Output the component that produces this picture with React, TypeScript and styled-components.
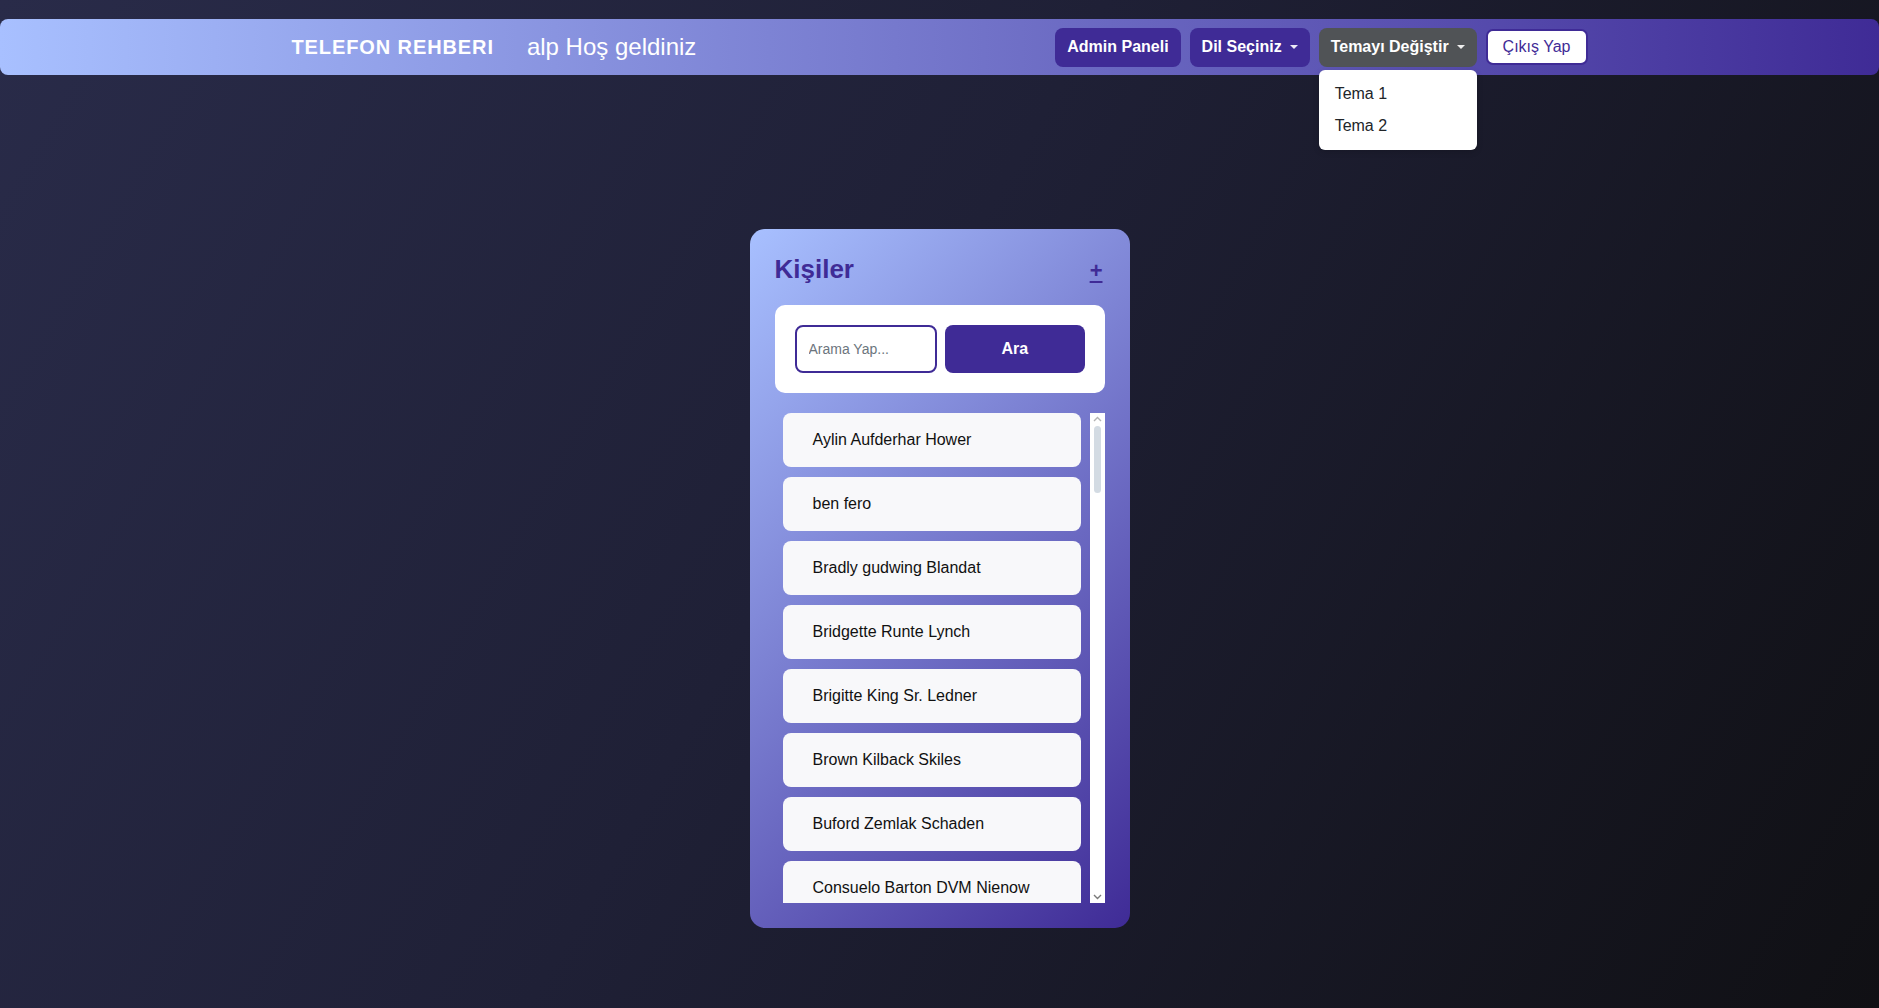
import React from 'react';

import styled, { createGlobalStyle } from 'styled-components';

const PURPLE = '#3f2b96';
const SKY = '#a8c0ff';

const GlobalStyle = createGlobalStyle`
  html,
  body {
    margin: 0;
    height: 100%;
  }

  body {
    overflow: hidden;
    font-family: 'Liberation Sans', Arial, sans-serif;
    background: linear-gradient(120deg, #292b49 0%, #1f2036 45%, #101014 100%);
  }

  * {
    box-sizing: border-box;
  }
`;

const Page = styled.div`
  min-height: 100vh;
  padding-top: 19px;
`;

const TopBar = styled.header`
  height: 56px;
  border-radius: 8px;
  background: linear-gradient(to right, ${SKY}, ${PURPLE});
  display: flex;
  align-items: center;
`;

const Container = styled.div`
  width: 100%;
  max-width: 1320px;
  margin: 0 auto;
  padding: 0 12px;
  display: flex;
  align-items: center;
  justify-content: space-between;
`;

const BrandGroup = styled.div`
  display: flex;
  align-items: center;
  gap: 33px;
`;

const Brand = styled.span`
  color: #fff;
  font-size: 20px;
  font-weight: 700;
  letter-spacing: 0.9px;
  text-transform: uppercase;
`;

const Welcome = styled.span`
  color: #fff;
  font-size: 24px;
`;

const Actions = styled.nav`
  display: flex;
  align-items: center;
  gap: 9px;
`;

const NavButton = styled.button<{ $active?: boolean }>`
  height: 39px;
  padding: 0 12px;
  border: none;
  border-radius: 8px;
  background: ${(p) => (p.$active ? '#505356' : PURPLE)};
  color: #fff;
  font-family: inherit;
  font-size: 16px;
  font-weight: 700;
  display: flex;
  align-items: center;
  cursor: pointer;
`;

const Caret = styled.span`
  display: inline-block;
  margin-left: 8px;
  border-top: 4.8px solid #fff;
  border-left: 4.8px solid transparent;
  border-right: 4.8px solid transparent;
  opacity: 0.9;
`;

const Dropdown = styled.div`
  position: relative;
`;

const Menu = styled.ul`
  position: absolute;
  top: 42px;
  left: 0;
  min-width: 158px;
  margin: 0;
  padding: 8px 0;
  list-style: none;
  background: #fff;
  border-radius: 6px;
  box-shadow: 0 2px 6px rgba(0, 0, 0, 0.15);
  z-index: 10;
`;

const MenuItem = styled.li`
  padding: 4px 16px;
  font-size: 16px;
  line-height: 24px;
  color: #212529;
`;

const LogoutButton = styled.button`
  height: 36px;
  padding: 0 15px;
  border: 2px solid ${PURPLE};
  border-radius: 7px;
  background: #fff;
  color: ${PURPLE};
  font-family: inherit;
  font-size: 16px;
  cursor: pointer;
`;

const Main = styled.main`
  display: flex;
  justify-content: center;
  padding-top: 154px;
`;

const Card = styled.section`
  width: 380px;
  padding: 25px;
  border-radius: 15px;
  background: linear-gradient(135deg, ${SKY} 0%, ${PURPLE} 100%);
`;

const CardHeader = styled.div`
  display: flex;
  align-items: center;
  justify-content: space-between;
  margin-bottom: 20px;
`;

const Title = styled.h2`
  margin: 0;
  font-size: 26px;
  line-height: 31px;
  font-weight: 700;
  color: ${PURPLE};
`;

const AddButton = styled.button`
  margin-top: 2px;
  padding: 0 2px;
  border: none;
  background: none;
  color: ${PURPLE};
  font-family: inherit;
  font-size: 22px;
  font-weight: 700;
  line-height: 1;
  text-decoration: underline;
  text-underline-offset: 3px;
  cursor: pointer;
`;

const SearchBox = styled.form`
  display: grid;
  grid-template-columns: minmax(0, 143fr) minmax(0, 140fr);
  gap: 8px;
  padding: 20px;
  background: #fff;
  border-radius: 10px;
`;

const SearchInput = styled.input`
  width: 100%;
  height: 48px;
  padding: 0 12px;
  border: 2px solid ${PURPLE};
  border-radius: 8px;
  font-family: inherit;
  font-size: 14px;
  outline: none;

  &::placeholder {
    color: #6c757d;
  }
`;

const SearchButton = styled.button`
  width: 100%;
  height: 48px;
  border: none;
  border-radius: 8px;
  background: ${PURPLE};
  color: #fff;
  font-family: inherit;
  font-size: 16px;
  font-weight: 700;
  cursor: pointer;
`;

const ListFrame = styled.div`
  display: flex;
  height: 490px;
  margin-top: 20px;
`;

const ContactList = styled.ul`
  flex: 1;
  margin: 0;
  padding: 0 9px 0 8px;
  list-style: none;
  overflow-y: auto;
  scrollbar-width: none;
  display: flex;
  flex-direction: column;
  gap: 10px;

  &::-webkit-scrollbar {
    display: none;
  }
`;

const ScrollTrack = styled.div`
  width: 15px;
  background: #fff;
  display: flex;
  flex-direction: column;
  align-items: center;
  padding: 3px 0;
`;

const ScrollArrow = styled.svg`
  flex-shrink: 0;
  display: block;
`;

const ScrollThumb = styled.div`
  width: 7px;
  height: 67px;
  margin-top: 4px;
  border-radius: 4px;
  background: #d3dbe3;
`;

const ScrollSpacer = styled.div`
  flex: 1;
`;

const ContactItem = styled.li`
  flex-shrink: 0;
  height: 54px;
  padding: 0 30px;
  display: flex;
  align-items: center;
  background: #f8f8fa;
  border-radius: 8px;
  font-size: 16px;
  color: #111;
`;

const contacts = [
  'Aylin Aufderhar Hower',
  'ben fero',
  'Bradly gudwing Blandat',
  'Bridgette Runte Lynch',
  'Brigitte King Sr. Ledner',
  'Brown Kilback Skiles',
  'Buford Zemlak Schaden',
  'Consuelo Barton DVM Nienow',
  'Dameon Hilll Kuhic',
  'Dayna Gutkowski Jr. Mraz',
  'Delia Kertzmann Bode',
  'Destini Rolfson Wiza',
  'Earline Hane Crist',
  'Elian Schmitt Feest',
  'Emmie Kuvalis Zieme',
  'Esteban Goyette Ward',
  'Felipa Quigley Bins',
  'Flavio Kunze Stark',
  'Garret Lind Becker',
  'Giovanna Hahn Erdman',
  'Hailee Torp Lowe',
  'Hobart Dare Pouros',
  'Isidro Marks Ankunding',
  'Jaida Wehner Koss',
  'Jaron Cremin Sauer',
  'Kailyn Bogan Kiehn',
  'Kody Ritchie Frami',
  'Lavada Mante Hickle',
  'Lennie Rempel Yost',
  'Mafalda Jast Okuneva',
  'Marlon Stehr Harris',
  'Nella Herzog Wolff',
  'Nikko Beier Kling',
  'Ottilie Price Runolfsdottir',
  'Payton Larkin Gerlach',
  'Quinten Mohr Baumbach',
  'Raegan Lesch Blick',
  'Rosendo Kohler Hauck',
  'Sabina Grant Dickens',
  'Shanon Lubowitz Reilly',
  'Talon Moen Weimann',
  'Trudie Hessel Fay',
  'Ursula Kerluke Ondricka',
  'Verna Bauch Tromp',
  'Wava Swift Langosh',
  'Wilber Daugherty Purdy',
  'Xander Toy Heller',
  'Yvonne Murazik Brekke',
  'Zella Powlowski Hammes',
  'Zion Fadel Schuster',
];

const App: React.FC = () => {
  return (
    <>
      <GlobalStyle />
      <Page>
        <TopBar>
          <Container>
            <BrandGroup>
              <Brand>Telefon Rehberi</Brand>
              <Welcome>alp Hoş geldiniz</Welcome>
            </BrandGroup>
            <Actions>
              <NavButton>Admin Paneli</NavButton>
              <NavButton>
                Dil Seçiniz
                <Caret />
              </NavButton>
              <Dropdown>
                <NavButton $active>
                  Temayı Değiştir
                  <Caret />
                </NavButton>
                <Menu>
                  <MenuItem>Tema 1</MenuItem>
                  <MenuItem>Tema 2</MenuItem>
                </Menu>
              </Dropdown>
              <LogoutButton>Çıkış Yap</LogoutButton>
            </Actions>
          </Container>
        </TopBar>
        <Main>
          <Card>
            <CardHeader>
              <Title>Kişiler</Title>
              <AddButton type="button">+</AddButton>
            </CardHeader>
            <SearchBox onSubmit={(e) => e.preventDefault()}>
              <SearchInput placeholder="Arama Yap..." />
              <SearchButton type="submit">Ara</SearchButton>
            </SearchBox>
            <ListFrame>
              <ContactList>
                {contacts.map((name) => (
                  <ContactItem key={name}>{name}</ContactItem>
                ))}
              </ContactList>
              <ScrollTrack>
                <ScrollArrow width="9" height="6" viewBox="0 0 9 6">
                  <path d="M1 5 L4.5 1.5 L8 5" fill="none" stroke="#b4b4b4" strokeWidth="1.4" />
                </ScrollArrow>
                <ScrollThumb />
                <ScrollSpacer />
                <ScrollArrow width="9" height="6" viewBox="0 0 9 6">
                  <path d="M1 1 L4.5 4.5 L8 1" fill="none" stroke="#7a7a7a" strokeWidth="1.4" />
                </ScrollArrow>
              </ScrollTrack>
            </ListFrame>
          </Card>
        </Main>
      </Page>
    </>
  );
};

export default App;
